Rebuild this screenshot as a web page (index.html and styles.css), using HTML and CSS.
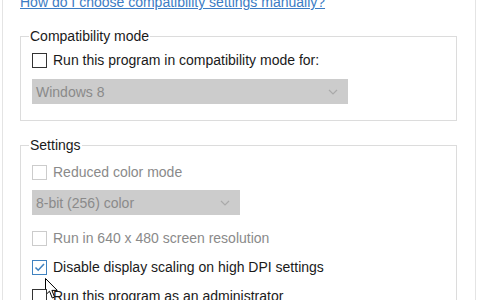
FILE: index.html
```html
<!DOCTYPE html>
<html>
<head>
<meta charset="utf-8">
<link rel="stylesheet" href="styles.css">
</head>
<body>
<div class="page">
  <a class="help" href="#">How do I choose compatibility settings manually?</a>
  <fieldset class="group group-compat">
    <legend>Compatibility mode</legend>
    <div class="check-row">
      <span class="box"></span>
      <span class="label">Run this program in compatibility mode for:</span>
    </div>
    <div class="select select-wide">
      <span>Windows 8</span>
      <svg class="chev" width="10" height="6" viewBox="0 0 10 6"><path d="M1 1 L5 5 L9 1" fill="none" stroke="#aaaaaa" stroke-width="1.2"/></svg>
    </div>
  </fieldset>
  <fieldset class="group group-settings">
    <legend>Settings</legend>
    <div class="check-row disabled first">
      <span class="box"></span>
      <span class="label">Reduced color mode</span>
    </div>
    <div class="select select-narrow">
      <span>8-bit (256) color</span>
      <svg class="chev" width="10" height="6" viewBox="0 0 10 6"><path d="M1 1 L5 5 L9 1" fill="none" stroke="#aaaaaa" stroke-width="1.2"/></svg>
    </div>
    <div class="check-row disabled">
      <span class="box"></span>
      <span class="label">Run in 640 x 480 screen resolution</span>
    </div>
    <div class="check-row checked">
      <span class="box"><svg width="13" height="13" viewBox="0 0 13 13"><path d="M2.5 6.5 L5.2 9.2 L11 3" fill="none" stroke="#3f82c0" stroke-width="1.6"/></svg></span>
      <span class="label">Disable display scaling on high DPI settings</span>
      <svg class="cursor" width="14" height="22" viewBox="0 0 14 22"><path d="M0.5 0.5 L0.5 17 L4.5 13.2 L7.3 20 L9.6 19 L6.9 12.4 L12.3 12.4 Z" fill="#ffffff" stroke="#000000" stroke-width="1" stroke-linejoin="miter"/></svg>
    </div>
    <div class="check-row">
      <span class="box"></span>
      <span class="label">Run this program as an administrator</span>
    </div>
  </fieldset>
</div>
</body>
</html>
```
FILE: styles.css
```css
html, body {
  margin: 0;
  padding: 0;
  background: #ffffff;
}
body {
  width: 480px;
  height: 300px;
  overflow: hidden;
  font-family: "Liberation Sans", Arial, sans-serif;
  font-size: 14px;
  color: #1a1a1a;
}
.page {
  margin-left: 2px;
  width: 474px;
  height: 300px;
  overflow: hidden;
  border-left: 1px solid #e4e4e4;
  border-right: 1px solid #e4e4e4;
  padding-left: 17px;
  box-sizing: border-box;
}
.help {
  display: block;
  margin-top: -6px;
  line-height: 16px;
  color: #3b7cc4;
  text-decoration: underline;
}
.group {
  margin: 0;
  width: 437px;
  box-sizing: border-box;
  border: 1px solid #dcdcdc;
  padding: 0 0 0 11px;
  min-inline-size: 0;
}
.group legend {
  margin-left: -3px;
  padding: 0 1px;
  line-height: 18px;
  color: #1a1a1a;
}
.group-compat {
  margin-top: 17px;
  padding-top: 7px;
  padding-bottom: 16px;
}
.group-settings {
  margin-top: 15px;
  padding-top: 10px;
  height: 200px;
}
.check-row {
  position: relative;
  display: flex;
  align-items: center;
  gap: 6px;
  height: 16px;
  margin-bottom: 11px;
}
.box {
  width: 13px;
  height: 13px;
  border: 1px solid #333333;
  background: #ffffff;
  flex: none;
  display: flex;
}
.disabled .box {
  border-color: #cccccc;
}
.disabled .label {
  color: #8a8a8a;
}
.checked .box {
  border-color: #3f82c0;
}
.select {
  display: flex;
  align-items: center;
  justify-content: space-between;
  height: 25px;
  background: #cccccc;
  color: #8a8a8a;
  padding: 0 10px 0 4px;
  box-sizing: border-box;
  margin-bottom: 15px;
}
.select-wide {
  width: 316px;
  margin-bottom: 0;
}
.select-narrow {
  width: 208px;
}
.group-settings .check-row {
  margin-bottom: 13px;
}
.group-settings .check-row.first {
  margin-bottom: 10px;
}
.cursor {
  position: absolute;
  left: 13px;
  top: 19px;
}
```
